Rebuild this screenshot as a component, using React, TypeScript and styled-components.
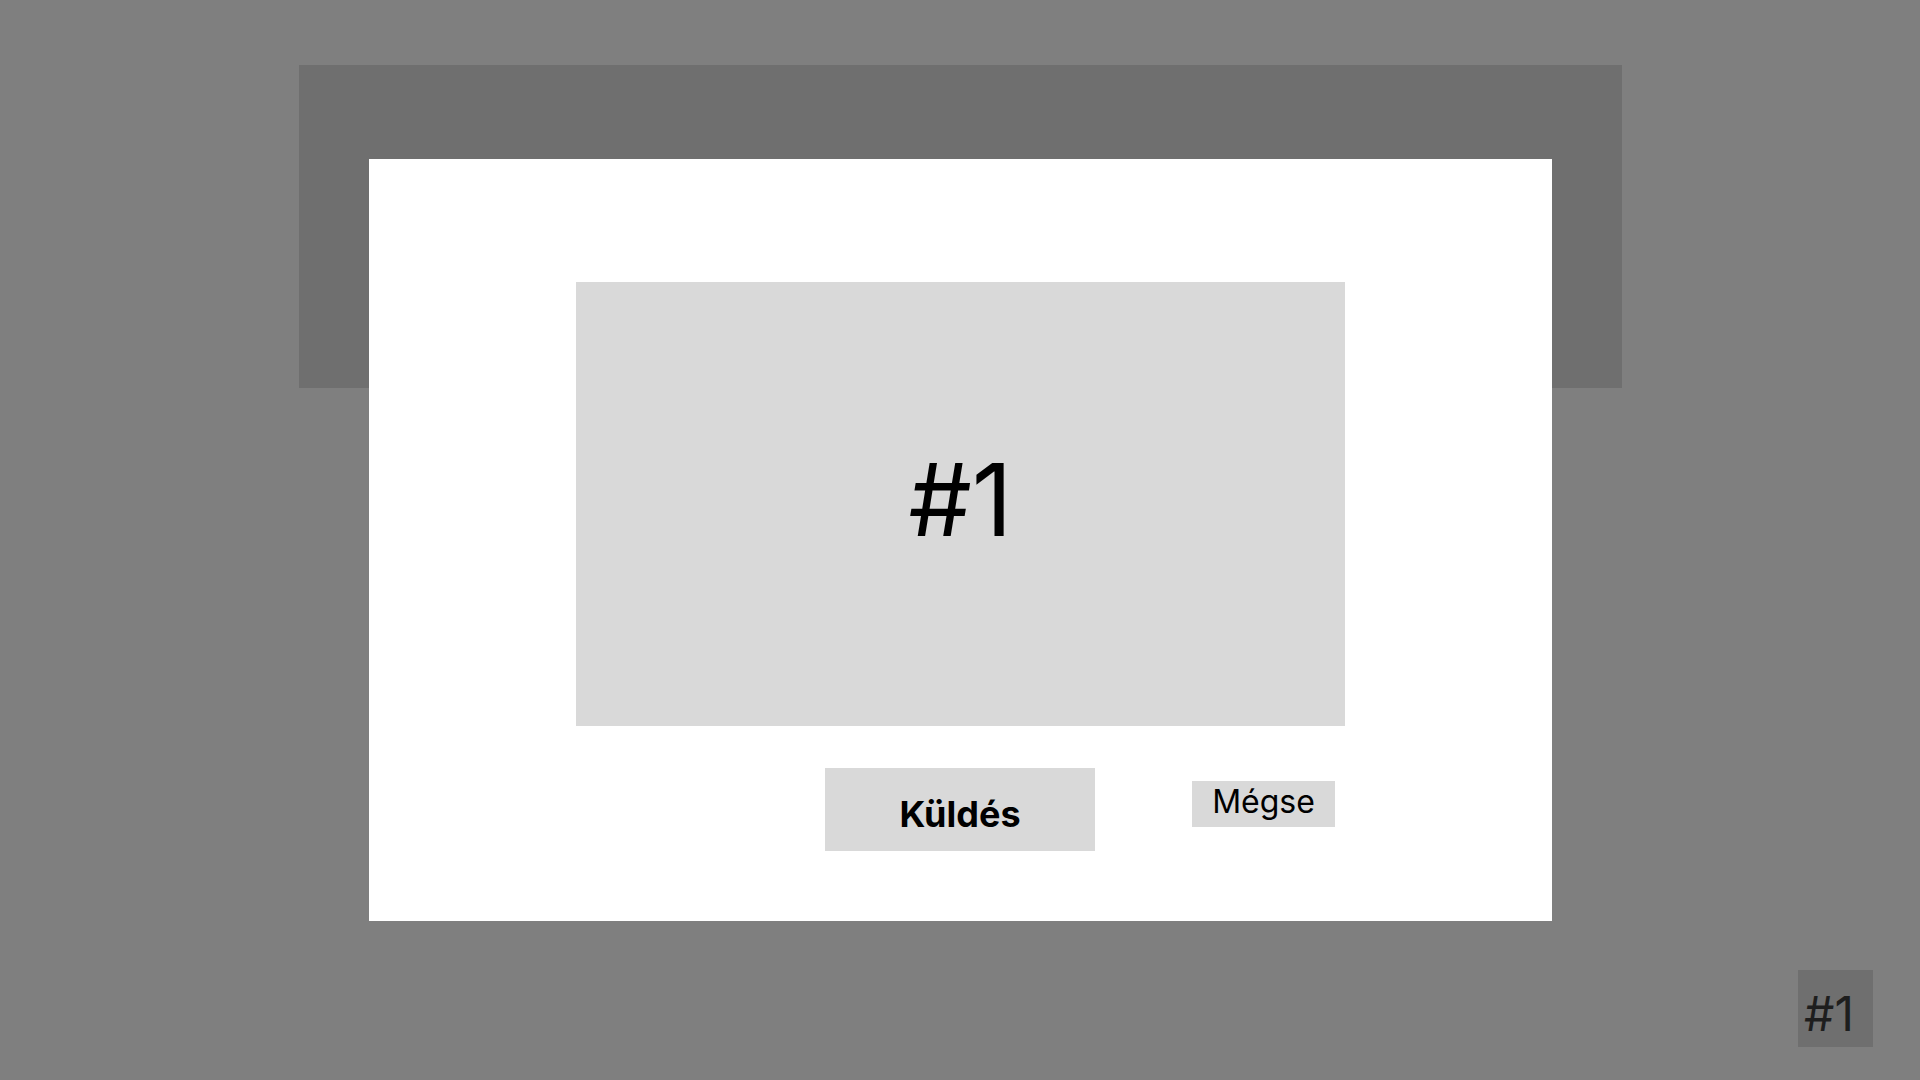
import React from "react";
import styled, { createGlobalStyle } from "styled-components";

const Global = createGlobalStyle`
  html, body { margin: 0; padding: 0; }
  body {
    background: #7f7f7f;
    font-family: Inter, "Noto Sans", sans-serif;
    width: 1920px;
    height: 1080px;
    overflow: hidden;
  }
`;

const Page = styled.div`
  position: relative;
  width: 1920px;
  height: 1080px;
  padding: 65px 298px 0 299px;
  box-sizing: border-box;
`;

const Backdrop = styled.div`
  width: 1323px;
  height: 323px;
  background: #6f6f6f;
`;

const Modal = styled.div`
  position: absolute;
  left: 369px;
  top: 159px;
  width: 1183px;
  height: 762px;
  background: #ffffff;
  box-sizing: border-box;
  padding-top: 123px;
  display: flex;
  flex-direction: column;
  align-items: center;
`;

const Preview = styled.div`
  width: 769px;
  height: 444px;
  background: #d9d9d9;
  display: flex;
  align-items: center;
  justify-content: center;
  padding-bottom: 10px;
  box-sizing: border-box;
  font-size: 100px;
  font-weight: 400;
  color: #000;
`;

const Actions = styled.div`
  width: 769px;
  margin-top: 42px;
  display: grid;
  grid-template-columns: 249px auto 1fr;
  align-items: start;
`;

const Button = styled.button<{ $primary?: boolean }>`
  border: none;
  margin: 0;
  font-family: Inter, "Noto Sans", sans-serif;
  background: #d9d9d9;
  color: #000;
  display: flex;
  align-items: center;
  justify-content: center;
  padding: 0;
  cursor: pointer;
  ${(p) =>
    p.$primary
      ? `
    grid-column: 2;
    width: 270px;
    height: 83px;
    font-size: 36px;
    font-weight: 700;
    padding-top: 9px;
  `
      : `
    grid-column: 3;
    justify-self: end;
    margin-right: 10px;
    margin-top: 13px;
    width: 143px;
    height: 46px;
    font-size: 32px;
    font-weight: 400;
    padding-bottom: 6px;
  `}
`;

const Badge = styled.div`
  position: absolute;
  right: 47px;
  bottom: 33px;
  width: 75px;
  height: 77px;
  background: #6f6f6f;
  color: #1e1e1e;
  font-size: 48px;
  display: flex;
  align-items: center;
  padding-left: 6px;
  padding-top: 10px;
  box-sizing: border-box;
`;

export default function App() {
  return (
    <>
      <Global />
      <Page>
        <Backdrop />
        <Modal>
          <Preview>#1</Preview>
          <Actions>
            <Button $primary>Küldés</Button>
            <Button>Mégse</Button>
          </Actions>
        </Modal>
        <Badge>#1</Badge>
      </Page>
    </>
  );
}
